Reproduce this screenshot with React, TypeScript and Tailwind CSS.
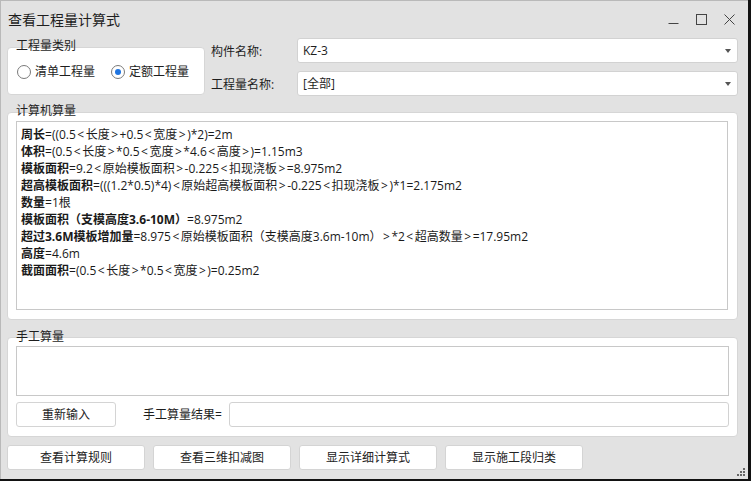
import React from 'react';

const FONT = "font-['Open_Sans','Noto_Sans_CJK_SC',sans-serif]";

interface Part {
  text: string;
  bold?: boolean;
}

const formulas: Part[][] = [
  [{ text: '周长', bold: true }, { text: '=((0.5<长度>+0.5<宽度>)*2)=2m' }],
  [{ text: '体积', bold: true }, { text: '=(0.5<长度>*0.5<宽度>*4.6<高度>)=1.15m3' }],
  [{ text: '模板面积', bold: true }, { text: '=9.2<原始模板面积>-0.225<扣现浇板>=8.975m2' }],
  [
    { text: '超高模板面积', bold: true },
    { text: '=(((1.2*0.5)*4)<原始超高模板面积>-0.225<扣现浇板>)*1=2.175m2' },
  ],
  [{ text: '数量', bold: true }, { text: '=1根' }],
  [{ text: '模板面积（支模高度3.6-10M）', bold: true }, { text: '=8.975m2' }],
  [
    { text: '超过3.6M模板增加量', bold: true },
    { text: '=8.975<原始模板面积（支模高度3.6m-10m）>*2<超高数量>=17.95m2' },
  ],
  [{ text: '高度', bold: true }, { text: '=4.6m' }],
  [{ text: '截面面积', bold: true }, { text: '=(0.5<长度>*0.5<宽度>)=0.25m2' }],
];

// angle brackets get a little air on both sides, like the original font
const renderText = (text: string) =>
  text.split(/([<>])/).map((s, i) =>
    s === '<' || s === '>' ? (
      <span key={i} className="px-[1.5px]">
        {s}
      </span>
    ) : (
      <React.Fragment key={i}>{s}</React.Fragment>
    )
  );

const Radio: React.FC<{ checked?: boolean; label: string }> = ({ checked, label }) => (
  <label className="flex items-center gap-[4px]">
    <span className="w-[14px] h-[14px] rounded-full border border-[#7a7a7a] bg-white flex items-center justify-center">
      {checked && <span className="w-[6px] h-[6px] rounded-full bg-[#1f74e0]" />}
    </span>
    <span className="text-[12px] text-[#1e1e1e]">{label}</span>
  </label>
);

const Select: React.FC<{ value: string }> = ({ value }) => (
  <div className="h-[25px] bg-white border border-[#d2d2d2] rounded-[3px] flex items-center justify-between pl-[5px] pr-[6px]">
    <span className="text-[12px] text-[#1e1e1e]">{value}</span>
    <svg width="6" height="4" viewBox="0 0 6 4">
      <path d="M0 0 H6 L3 4 Z" fill="#555" />
    </svg>
  </div>
);

const Btn: React.FC<{ label: string; className?: string }> = ({ label, className }) => (
  <button
    className={`h-[25px] bg-white border border-[#d4d4d4] rounded-[3px] text-[12px] text-[#222] flex items-center justify-center ${className ?? ''}`}
  >
    {label}
  </button>
);

const App: React.FC = () => {
  return (
    <div className={`w-[751px] h-[481px] bg-[#121212] overflow-hidden ${FONT}`}>
      <div className="w-[748px] h-[479px] bg-[#e2e2e2] border-t border-l border-[#b9b9b9] flex flex-col relative">
        {/* Title bar */}
        <div className="h-[37px] flex items-center justify-between pl-[7px] pr-[13px]">
          <span className="text-[14px] text-[#1e1e1e]">查看工程量计算式</span>
          <div className="flex items-center gap-[17px]">
            <svg width="11" height="11" viewBox="0 0 11 11">
              <path d="M0.5 9.5 H10.5" stroke="#444" strokeWidth="1" />
            </svg>
            <svg width="11" height="11" viewBox="0 0 11 11">
              <rect x="0.5" y="0.5" width="10" height="10" fill="none" stroke="#444" strokeWidth="1" />
            </svg>
            <svg width="11" height="11" viewBox="0 0 11 11">
              <path d="M0.5 0.5 L10.5 10.5 M10.5 0.5 L0.5 10.5" stroke="#444" strokeWidth="1" />
            </svg>
          </div>
        </div>

        {/* Top row */}
        <div className="flex items-start h-[58px] pl-[6px] pr-[10px]">
          <div className="relative w-[198px] h-[48px] mt-[9px] bg-white border border-[#d6d6d6] rounded-[4px] flex items-center gap-[16px] pl-[9px] pt-[2px]">
            <span className="absolute left-[8px] top-[-11px] text-[12px] text-[#1e1e1e]">工程量类别</span>
            <Radio label="清单工程量" />
            <Radio checked label="定额工程量" />
          </div>
          <div className="flex flex-col gap-[8px] ml-[6px] w-[86px] pt-[1px]">
            <span className="h-[25px] leading-[25px] text-[12px] text-[#1e1e1e]">构件名称:</span>
            <span className="h-[25px] leading-[25px] text-[12px] text-[#1e1e1e]">工程量名称:</span>
          </div>
          <div className="flex-1 flex flex-col gap-[8px]">
            <Select value="KZ-3" />
            <Select value="[全部]" />
          </div>
        </div>

        {/* Computer quantity */}
        <div className="relative ml-[6px] mr-[10px] mt-[16px] h-[208px] bg-white border border-[#d6d6d6] rounded-[4px] pt-[8px] pl-[8px] pr-[9px] pb-[9px]">
          <span className="absolute left-[8px] top-[-11px] text-[12px] text-[#1e1e1e]">计算机算量</span>
          <div className="h-full border border-[#c8c8c8] pt-[4px] pl-[4px] text-[12px] text-[#1a1a1a]">
            {formulas.map((line, i) => (
              <div key={i} className="h-[17px] leading-[17px] whitespace-nowrap">
                {line.map((p, j) => (
                  <span key={j} className={p.bold ? 'font-bold' : ''}>
                    {renderText(p.text)}
                  </span>
                ))}
              </div>
            ))}
          </div>
        </div>

        {/* Manual quantity */}
        <div className="relative ml-[6px] mr-[10px] mt-[17px] h-[100px] bg-white border border-[#d6d6d6] rounded-[4px] pt-[8px] pl-[8px] pr-[8px] flex flex-col">
          <span className="absolute left-[8px] top-[-10px] text-[12px] text-[#1e1e1e]">手工算量</span>
          <div className="h-[50px] border border-[#c8c8c8]" />
          <div className="flex items-center mt-[6px]">
            <Btn label="重新输入" className="w-[100px]" />
            <span className="ml-[27px] w-[86px] text-[12px] text-[#1e1e1e]">手工算量结果=</span>
            <div className="flex-1 h-[25px] border border-[#d2d2d2] rounded-[3px] bg-white" />
          </div>
        </div>

        {/* Bottom buttons */}
        <div className="flex gap-[8px] pl-[6px] mt-[8px]">
          <Btn label="查看计算规则" className="w-[138px]" />
          <Btn label="查看三维扣减图" className="w-[138px]" />
          <Btn label="显示详细计算式" className="w-[138px]" />
          <Btn label="显示施工段归类" className="w-[138px]" />
        </div>

        {/* Resize grip */}
        <svg className="absolute right-[2px] bottom-[2px]" width="10" height="10" viewBox="0 0 10 10">
          <rect x="7" y="1" width="2" height="2" fill="#666" />
          <rect x="4" y="4" width="2" height="2" fill="#666" />
          <rect x="7" y="4" width="2" height="2" fill="#666" />
          <rect x="1" y="7" width="2" height="2" fill="#666" />
          <rect x="4" y="7" width="2" height="2" fill="#666" />
          <rect x="7" y="7" width="2" height="2" fill="#666" />
        </svg>
      </div>
    </div>
  );
};

export default App;
